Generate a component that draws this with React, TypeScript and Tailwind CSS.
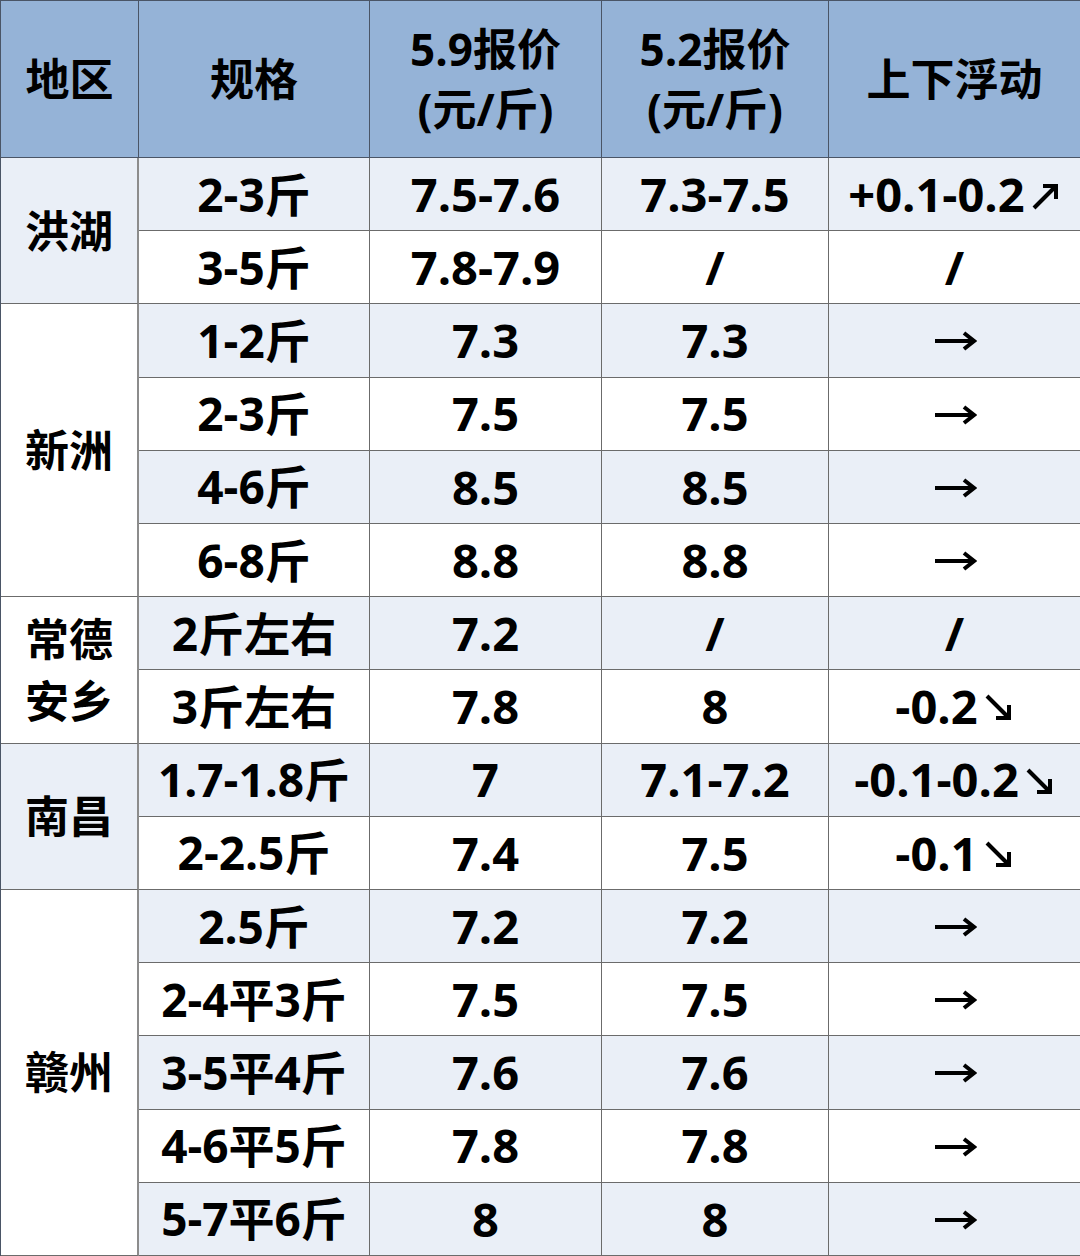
const rows = [
  { spec: "2-3斤", p59: "7.5-7.6", p52: "7.3-7.5", diff: "+0.1-0.2", arrow: "↗" },
  { spec: "3-5斤", p59: "7.8-7.9", p52: "/", diff: "/", arrow: "" },
  { spec: "1-2斤", p59: "7.3", p52: "7.3", diff: "→", arrow: "" },
  { spec: "2-3斤", p59: "7.5", p52: "7.5", diff: "→", arrow: "" },
  { spec: "4-6斤", p59: "8.5", p52: "8.5", diff: "→", arrow: "" },
  { spec: "6-8斤", p59: "8.8", p52: "8.8", diff: "→", arrow: "" },
  { spec: "2斤左右", p59: "7.2", p52: "/", diff: "/", arrow: "" },
  { spec: "3斤左右", p59: "7.8", p52: "8", diff: "-0.2", arrow: "↘" },
  { spec: "1.7-1.8斤", p59: "7", p52: "7.1-7.2", diff: "-0.1-0.2", arrow: "↘" },
  { spec: "2-2.5斤", p59: "7.4", p52: "7.5", diff: "-0.1", arrow: "↘" },
  { spec: "2.5斤", p59: "7.2", p52: "7.2", diff: "→", arrow: "" },
  { spec: "2-4平3斤", p59: "7.5", p52: "7.5", diff: "→", arrow: "" },
  { spec: "3-5平4斤", p59: "7.6", p52: "7.6", diff: "→", arrow: "" },
  { spec: "4-6平5斤", p59: "7.8", p52: "7.8", diff: "→", arrow: "" },
  { spec: "5-7平6斤", p59: "8", p52: "8", diff: "→", arrow: "" },
];

// region cells: start row (0-based in body), span, label lines, shaded
const regions = [
  { start: 0, span: 2, lines: ["洪湖"], shaded: true },
  { start: 2, span: 4, lines: ["新洲"], shaded: false },
  { start: 6, span: 2, lines: ["常德", "安乡"], shaded: false },
  { start: 8, span: 2, lines: ["南昌"], shaded: true },
  { start: 10, span: 5, lines: ["赣州"], shaded: false },
];

const font = { fontFamily: '"Open Sans", "Noto Sans CJK SC", sans-serif' };

function Cell({ children, shaded, className = "" }: { children: React.ReactNode; shaded: boolean; className?: string }) {
  return (
    <div
      className={`flex items-center justify-center border-r border-b border-[#6b6b6b] ${shaded ? "bg-[#eaeff7]" : "bg-white"} ${className}`}
    >
      {children}
    </div>
  );
}

// thick diagonal arrow, drawn like the bold ↗ / ↘ glyphs in the sheet
function DiagArrow({ dir }: { dir: "up" | "down" }) {
  return (
    <svg width="30" height="30" viewBox="0 0 30 30" className="ml-[6px] mt-[4px]">
      {dir === "up" ? (
        <g stroke="#000" strokeWidth="4" fill="none" strokeLinecap="butt">
          <line x1="3" y1="27" x2="25" y2="5" />
          <polyline points="12,5 25,5 25,18" />
        </g>
      ) : (
        <g stroke="#000" strokeWidth="4" fill="none" strokeLinecap="butt">
          <line x1="3" y1="3" x2="25" y2="25" />
          <polyline points="12,25 25,25 25,12" />
        </g>
      )}
    </svg>
  );
}

function RightArrow() {
  return (
    <svg width="42" height="22" viewBox="0 0 42 22" className="ml-[2px] mt-[2px]">
      <g stroke="#000" strokeWidth="4" fill="none">
        <line x1="0" y1="11" x2="38" y2="11" />
        <polyline points="29,3 39,11 29,19" />
      </g>
    </svg>
  );
}

export default function App() {
  return (
    <div className="w-[1080px] h-[1256px] bg-white text-black font-bold" style={font}>
      <div className="grid h-full grid-cols-[138px_231px_232px_227px_252px] grid-rows-[157px_repeat(15,1fr)] border-t border-l border-[#4a5566]">
        {/* header */}
        {["地区", "规格"].map((h) => (
          <div key={h} className="flex items-center justify-center bg-[#95b3d7] border-r border-b border-[#4a5566] text-[44px] leading-none">
            {h}
          </div>
        ))}
        {["5.9报价", "5.2报价"].map((h) => (
          <div key={h} className="flex flex-col items-center justify-center bg-[#95b3d7] border-r border-b border-[#4a5566] text-[44px] leading-[60px]">
            <span>{h}</span>
            <span>(元/斤)</span>
          </div>
        ))}
        <div className="flex items-center justify-center bg-[#95b3d7] border-r border-b border-[#4a5566] text-[44px] leading-none">
          上下浮动
        </div>

        {regions.map((r) => (
          <div
            key={r.lines.join("")}
            className={`col-start-1 flex flex-col items-center justify-center border-r-2 border-r-[#8c8c8c] border-b border-b-[#6b6b6b] text-[44px] leading-[62px] ${r.shaded ? "bg-[#eaeff7]" : "bg-white"}`}
            style={{ gridRowStart: r.start + 2, gridRowEnd: `span ${r.span}` }}
          >
            {r.lines.map((l) => (
              <span key={l}>{l}</span>
            ))}
          </div>
        ))}

        {rows.map((row, i) => {
          const shaded = i % 2 === 0;
          return [
            <Cell key={`s${i}`} shaded={shaded} className="col-start-2 text-[46px]">
              {row.spec}
            </Cell>,
            <Cell key={`a${i}`} shaded={shaded} className="text-[47px]">
              {row.p59}
            </Cell>,
            <Cell key={`b${i}`} shaded={shaded} className="text-[47px]">
              {row.p52}
            </Cell>,
            <Cell key={`c${i}`} shaded={shaded} className="text-[47px]">
              {row.diff === "→" ? (
                <RightArrow />
              ) : (
                <span className="flex items-center">
                  {row.diff}
                  {row.arrow && <DiagArrow dir={row.arrow === "↗" ? "up" : "down"} />}
                </span>
              )}
            </Cell>,
          ];
        })}
      </div>
    </div>
  );
}
